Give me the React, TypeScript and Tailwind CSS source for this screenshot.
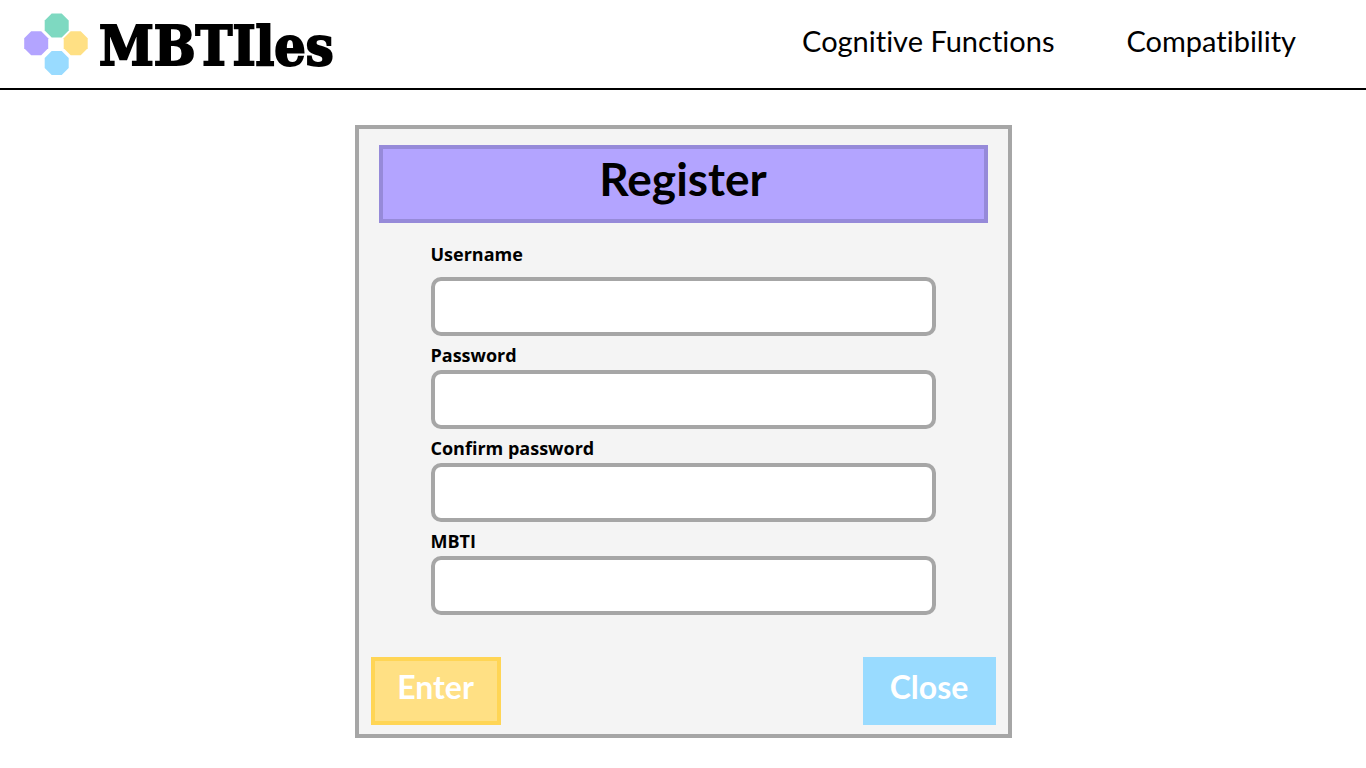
import React from "react";

const fields = [
  { id: "username", label: "Username", type: "text" },
  { id: "password", label: "Password", type: "password" },
  { id: "confirm", label: "Confirm password", type: "password" },
  { id: "mbti", label: "MBTI", type: "text" },
];

function Logo() {
  const octagon = "-5,-12 5,-12 12,-5 12,5 5,12 -5,12 -12,5 -12,-5";
  return (
    <svg viewBox="0 0 64 62" className="h-[62px] w-16 shrink-0" aria-hidden="true">
      <polygon points={octagon} transform="translate(32.7 12.5)" fill="#7ed9c1" />
      <polygon points={octagon} transform="translate(12.2 30.3)" fill="#b3a4ff" />
      <polygon points={octagon} transform="translate(51.7 30.3)" fill="#ffe084" />
      <polygon points={octagon} transform="translate(32.7 50)" fill="#99dbff" />
    </svg>
  );
}

export default function App() {
  return (
    <div className="min-h-screen bg-white font-['Lato',sans-serif] text-black [font-variant-ligatures:none]">
      <header className="flex h-[90px] items-center justify-between border-b-2 border-black pr-[70px] pl-6">
        <a href="#" className="flex items-center gap-[11px]">
          <Logo />
          <span className="pt-1 font-['DejaVu_Serif_Condensed','DejaVu_Serif',serif] text-[55px] leading-[60px] font-bold [-webkit-text-stroke:2px_black]">
            MBTIles
          </span>
        </a>
        <nav className="flex gap-[72px] pb-[6px] text-[29px] leading-9">
          <a href="#functions">Cognitive Functions</a>
          <a href="#compatibility">Compatibility</a>
        </nav>
      </header>

      <main className="px-4 pt-[35px] pb-[30px]">
        <form
          onSubmit={(e) => e.preventDefault()}
          className="mx-auto w-full max-w-[657px] border-4 border-[#a6a6a6] bg-[#f4f4f4] px-3 pt-4 pb-[9px]"
        >
          <h1 className="mx-2 border-4 border-[#968ad9] bg-[#b3a4ff] pt-[3px] pb-[13px] text-center text-[46px] leading-[54px] font-bold">
            Register
          </h1>
          <div className="mx-15 mt-4 flex flex-col gap-1">
            {fields.map((f) => (
              <div key={f.id} className="flex flex-col first:gap-2">
                <label
                  htmlFor={f.id}
                  className="font-['Open_Sans',sans-serif] text-[18px] leading-[30px] font-bold"
                >
                  {f.label}
                </label>
                <input
                  id={f.id}
                  type={f.type}
                  className="h-[59px] w-full rounded-[10px] border-4 border-[#a6a6a6] bg-white px-3 text-lg"
                />
              </div>
            ))}
          </div>
          <div className="mt-[42px] flex justify-between text-[32px] leading-9 font-bold text-white">
            <button type="submit" className="h-[68px] w-[130px] border-4 border-[#ffd555] bg-[#ffe084] pb-2">
              Enter
            </button>
            <button type="button" className="h-[68px] w-[133px] bg-[#99dbff] pb-2">
              Close
            </button>
          </div>
        </form>
      </main>
    </div>
  );
}
